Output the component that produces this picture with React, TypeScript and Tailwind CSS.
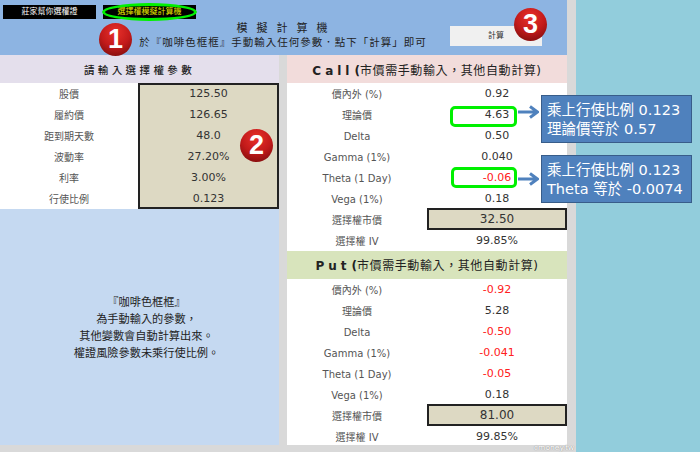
const FONT = "font-['DejaVu_Sans','Noto_Sans_CJK_TC',sans-serif]";

function Row({ label, value, red, boxed }: { label: string; value: string; red?: boolean; boxed?: boolean }) {
  return (
    <div className="grid grid-cols-[140px_140px] h-[21px] items-center text-[11px] bg-white text-[#333]">
      <div className="text-center text-[10px] text-[#555] pt-[2px]">{label}</div>
      {boxed ? (
        <div className="h-[22px] -mt-[2px] flex items-center justify-center bg-[#ddd9c3] border-2 border-[#222] text-[12px] pt-[1px]">{value}</div>
      ) : (
        <div className={`text-center pt-[2px] ${red ? "text-[#ff2020]" : ""}`}>{value}</div>
      )}
    </div>
  );
}

function Badge({ n, className }: { n: string; className: string }) {
  return (
    <div className={`absolute w-[33px] h-[33px] rounded-full flex items-center justify-center text-white font-bold text-[27px] leading-none font-['Liberation_Sans',sans-serif] bg-[radial-gradient(circle_at_50%_28%,#e8302a_0%,#c21a1a_50%,#6d0a0a_100%)] ${className}`}>
      {n}
    </div>
  );
}

function Callout({ lines, className }: { lines: string[]; className: string }) {
  return (
    <div className={`absolute left-[541px] w-[151px] bg-[#4f81bd] border border-[#385d8a] text-white text-[14.5px] leading-[19px] pl-[5px] pt-[5px] ${className}`}>
      {lines.map((l) => (
        <div key={l} className="whitespace-nowrap">{l}</div>
      ))}
    </div>
  );
}

function Arrow({ className }: { className: string }) {
  return (
    <svg className={`absolute left-[518px] ${className}`} width="21" height="14" viewBox="0 0 21 14" fill="none">
      <path d="M0 7H19M12 1.5L19.5 7L12 12.5" stroke="#4f81bd" strokeWidth="3" />
    </svg>
  );
}

const leftRows = [
  ["股價", "125.50"],
  ["履約價", "126.65"],
  ["距到期天數", "48.0"],
  ["波動率", "27.20%"],
  ["利率", "3.00%"],
  ["行使比例", "0.123"],
];

const callRows: [string, string, boolean?, boolean?][] = [
  ["價內外 (%)", "0.92"],
  ["理論價", "4.63"],
  ["Delta", "0.50"],
  ["Gamma (1%)", "0.040"],
  ["Theta (1 Day)", "-0.06", true],
  ["Vega (1%)", "0.18"],
  ["選擇權市價", "32.50", false, true],
  ["選擇權 IV", "99.85%"],
];

const putRows: [string, string, boolean?, boolean?][] = [
  ["價內外 (%)", "-0.92", true],
  ["理論價", "5.28"],
  ["Delta", "-0.50", true],
  ["Gamma (1%)", "-0.041", true],
  ["Theta (1 Day)", "-0.05", true],
  ["Vega (1%)", "0.18"],
  ["選擇權市價", "81.00", false, true],
  ["選擇權 IV", "99.85%"],
];

export default function App() {
  return (
    <div className={`relative w-[700px] h-[452px] overflow-hidden bg-[#92cddc] ${FONT}`}>
      <div className="w-[576px] h-full bg-[#d9d9d9] pr-[9px]">
        <header className="flex h-[55px] bg-[#8db4e2] text-[#222]">
          <div className="w-[450px]">
            <div className="flex gap-[7px] pl-[3px] pt-[5px]">
              <div className="w-[93px] h-[14px] bg-black text-white text-[8px] flex items-center justify-center">莊家幫你選權證</div>
              <div className="relative w-[93px] h-[14px] bg-black text-[#e6e600] text-[8px] flex items-center justify-center">
                選擇權模擬計算機
                <div className="absolute -inset-x-[1px] -top-[2px] -bottom-[2px] rounded-[50%] border-[3px] border-[#00f000]" />
              </div>
            </div>
            <div className="pl-[116px] text-center">
              <div className="text-[11px] leading-[14px] mt-[3px] pl-[7px] tracking-[9px]">模擬計算機</div>
              <div className="text-[10.5px] leading-[14px] -mt-[1px] tracking-[1px] whitespace-nowrap">於『咖啡色框框』手動輸入任何參數．點下「計算」即可</div>
            </div>
          </div>
          <button className="mt-[26px] w-[92px] h-[20px] bg-[#f0f0f0] text-[8px] text-[#333] flex items-center justify-center">計算</button>
        </header>

        <div className="flex gap-[8px]">
          <section className="w-[279px]">
            <div className="h-[28px] bg-[#e4dfec] flex items-center justify-center pt-[3px] text-[10.5px] tracking-[3.4px] font-medium text-[#222]">請輸入選擇權參數</div>
            <div className="grid grid-cols-[138px_141px] bg-white">
              <div className="flex flex-col">
                {leftRows.map(([l]) => (
                  <div key={l} className="h-[21px] pt-[2px] flex items-center justify-center text-[10px] text-[#555]">{l}</div>
                ))}
              </div>
              <div className="bg-[#ddd9c3] border-2 border-[#222] text-[11px] text-[#333]">
                <div className="flex flex-col -my-[2px]">
                  {leftRows.map(([l, v]) => (
                    <div key={l} className="h-[21px] pt-[2px] flex items-center justify-center">{v}</div>
                  ))}
                </div>
              </div>
            </div>
            <div className="h-[236px] bg-[#c5d9f1] flex flex-col items-center justify-center pt-[2px] pl-[14px] text-[11.2px] leading-[17px] text-[#222]">
              <div>『咖啡色框框』</div>
              <div>為手動輸入的參數，</div>
              <div>其他變數會自動計算出來。</div>
              <div>權證風險參數未乘行使比例。</div>
            </div>
          </section>

          <section className="w-[280px] h-[390px] overflow-hidden">
            <div className="h-[28px] bg-[#f2dcdb] flex items-center justify-center pt-[3px] text-[12px] text-[#222]">
              <b className="tracking-[4px] mr-[1px]">Call</b><b>(</b>
              <span className="tracking-[0.6px]">市價需手動輸入，其他自動計算)</span>
            </div>
            {callRows.map(([l, v, r, b]) => (
              <Row key={l} label={l} value={v} red={r} boxed={b} />
            ))}
            <div className="h-[28px] bg-[#d8e4bc] flex items-center justify-center pt-[2px] text-[12px] text-[#222]">
              <b className="tracking-[4px] mr-[1px]">Put</b><b>(</b>
              <span className="tracking-[0.6px]">市價需手動輸入，其他自動計算)</span>
            </div>
            {putRows.map(([l, v, r, b]) => (
              <Row key={l} label={l} value={v} red={r} boxed={b} />
            ))}
          </section>
        </div>
      </div>

      <Badge n="1" className="left-[99px] top-[23px]" />
      <Badge n="2" className="left-[240px] top-[129px]" />
      <Badge n="3" className="left-[514px] top-[8px]" />

      <div className="absolute left-[450px] top-[106px] w-[67px] h-[21px] rounded-[5px] border-[3px] border-[#00f000]" />
      <div className="absolute left-[451px] top-[167px] w-[66px] h-[21px] rounded-[5px] border-[3px] border-[#00f000]" />
      <Arrow className="top-[105px]" />
      <Arrow className="top-[172px]" />
      <Callout className="top-[95px] h-[48px]" lines={["乘上行使比例 0.123", "理論價等於 0.57"]} />
      <Callout className="top-[155px] h-[48px]" lines={["乘上行使比例 0.123", "Theta 等於 -0.0074"]} />

      <div className="absolute left-[534px] top-[443px] text-[7.5px] leading-[10px] text-white [text-shadow:0_0_1px_#666]">cmoney.tw</div>
    </div>
  );
}
